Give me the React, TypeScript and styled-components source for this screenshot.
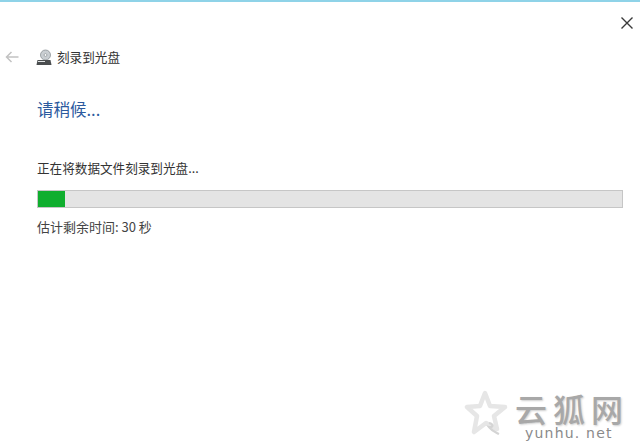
import React from "react";
import styled, { createGlobalStyle } from "styled-components";

const CJK = `"Noto Sans CJK SC", "Liberation Sans", sans-serif`;

const Global = createGlobalStyle`
  html, body { margin: 0; padding: 0; background: #fff; }
  body { width: 640px; height: 446px; overflow: hidden; font-family: ${CJK}; }
  svg { display: block; }
`;

const Dialog = styled.div`
  position: relative;
  width: 640px;
  height: 446px;
  box-sizing: border-box;
  border-top: 2px solid #8fd3e8;
  background: #fff;
  overflow: hidden;
`;

const CloseRow = styled.div`
  display: flex;
  justify-content: flex-end;
  height: 28px;
  padding: 13px 5px 0 0;
  box-sizing: content-box;
`;

const CloseButton = styled.button`
  width: 16px;
  height: 16px;
  padding: 0;
  border: 0;
  background: none;
  color: #3a3a3a;
  display: block;
`;

const Header = styled.div`
  display: flex;
  align-items: center;
  height: 22px;
  margin-top: 3px;
  padding-left: 5px;
`;

const BackButton = styled.span`
  display: block;
  width: 14px;
  height: 14px;
  color: #c2c2c2;
`;

const DiscIcon = styled.span`
  display: block;
  width: 16px;
  height: 17px;
  margin-left: 17px;
`;

const HeaderTitle = styled.span`
  margin-left: 5px;
  font-size: 12.6px;
  line-height: 22px;
  color: #333;
`;

const Content = styled.main`
  padding: 0 17px 0 37px;
`;

const Heading = styled.h1`
  margin: 30px 0 0;
  font-size: 16.5px;
  line-height: 22px;
  font-weight: 400;
  color: #2c5a9e;
`;

const Status = styled.p`
  margin: 39px 0 0;
  font-size: 12.6px;
  line-height: 18px;
  color: #333;
`;

const Track = styled.div`
  margin-top: 13px;
  height: 18px;
  box-sizing: border-box;
  border: 1px solid #c6c6c6;
  background: #e4e4e4;
`;

const Fill = styled.div`
  height: 100%;
  background: #0fae2e;
`;

const Remaining = styled.p`
  margin: 10px 0 0;
  font-size: 13px;
  line-height: 18px;
  color: #444;
`;

const Watermark = styled.div`
  position: absolute;
  left: 464px;
  top: 386px;
  display: flex;
  align-items: flex-start;
`;

const WatermarkText = styled.div`
  display: flex;
  flex-direction: column;
  gap: 1px;
  margin-left: 7px;
  padding-top: 3px;
`;

const WatermarkName = styled.span`
  font-family: "Noto Sans CJK SC", serif;
  font-size: 32px;
  line-height: 34px;
  letter-spacing: 6px;
  font-weight: 500;
  color: #a8a8a8;
  text-shadow: 1px 1px 2px #cfcfcf;
  white-space: nowrap;
`;

const WatermarkUrl = styled.span`
  font-family: "DejaVu Sans", sans-serif;
  font-size: 14px;
  line-height: 14px;
  letter-spacing: 1.2px;
  margin-left: 10px;
  color: #8a8a8a;
  white-space: nowrap;
`;

export default function App() {
  return (
    <Dialog>
      <Global />
      <CloseRow>
        <CloseButton aria-label="关闭">
          <svg width="16" height="16" viewBox="0 0 16 16" fill="none" stroke="currentColor" strokeWidth="1.4">
            <path d="M2.5 2.5 L13.5 13.5 M13.5 2.5 L2.5 13.5" />
          </svg>
        </CloseButton>
      </CloseRow>
      <Header>
        <BackButton>
          <svg width="14" height="14" viewBox="0 0 14 14" fill="none" stroke="currentColor" strokeWidth="1.5">
            <path d="M13.5 7 H1.5 M6.5 2 L1.5 7 L6.5 12" />
          </svg>
        </BackButton>
        <DiscIcon>
          <svg width="16" height="17" viewBox="0 0 16 17">
            <circle cx="9.5" cy="6" r="5" fill="#c9ced2" stroke="#8c9296" strokeWidth="0.8" />
            <circle cx="9.5" cy="6" r="1.4" fill="#fff" stroke="#7d8488" strokeWidth="0.6" />
            <path d="M1.5 11 H14.5 L15.5 16 H0.5 Z" fill="#4a4d4f" />
            <path d="M2 12.5 H9" stroke="#dfe2e3" strokeWidth="1" />
          </svg>
        </DiscIcon>
        <HeaderTitle>刻录到光盘</HeaderTitle>
      </Header>
      <Content>
        <Heading>请稍候...</Heading>
        <Status>正在将数据文件刻录到光盘...</Status>
        <Track>
          <Fill style={{ width: "4.7%" }} />
        </Track>
        <Remaining>估计剩余时间: 30 秒</Remaining>
      </Content>
      <Watermark>
        <svg width="44" height="50" viewBox="0 0 44 50" fill="none">
          <path d="M21 5 L26 18 L41 19 L30 28 L33 41 L22 35 L10 44 L13 28 L3 19 L16 18 Z" stroke="#e6e6e6" strokeWidth="4.5" strokeLinejoin="round" />
          <path d="M25 35 C30 36 29 40 25 39 C28 43 31 44 35 46" stroke="#d4d4d4" strokeWidth="2.2" />
        </svg>
        <WatermarkText>
          <WatermarkName>云狐网</WatermarkName>
          <WatermarkUrl>yunhu. net</WatermarkUrl>
        </WatermarkText>
      </Watermark>
    </Dialog>
  );
}
